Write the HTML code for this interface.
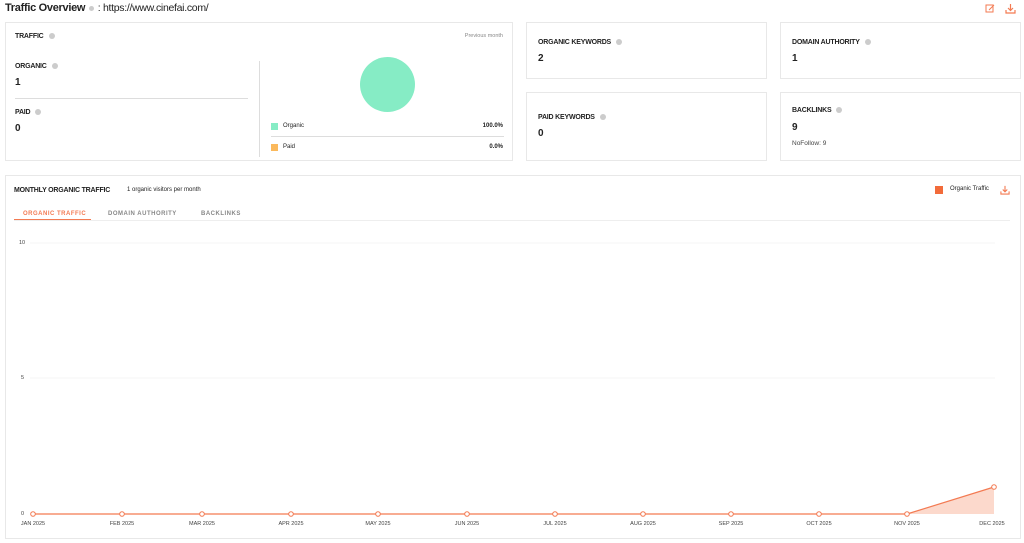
<!DOCTYPE html>
<html><head><style>
body{margin:0;width:1024px;height:543px;background:#fff;font-family:"Liberation Sans",sans-serif;color:#222;position:relative;overflow:hidden}
.a{position:absolute}
.card{position:absolute;border:1px solid #e8e8e8;background:#fff;box-sizing:border-box}
.lbl{font-size:7px;font-weight:bold;color:#222;letter-spacing:-0.2px}
.q{display:inline-block;width:6px;height:6px;border-radius:50%;background:#ccc;margin-left:5px;vertical-align:middle}
.val{font-size:10px;font-weight:bold}
.mo{font-size:5.5px;color:#444;position:absolute;top:521px;transform:translateX(-50%)}
</style></head><body>
<div class="a" style="left:5px;top:2px;font-size:11px;font-weight:bold;letter-spacing:-0.3px">Traffic Overview <span class="q" style="margin:0 1px;width:5px;height:5px"></span> <span style="font-weight:normal;font-size:10.5px">: https://www.cinefai.com/</span></div>
<svg class="a" style="left:985px;top:3px" width="11" height="11" viewBox="0 0 11 11"><rect x="1" y="2" width="7" height="7" fill="none" stroke="#f37a52" stroke-width="1"/><path d="M4 7L9 2" stroke="#f37a52" stroke-width="1"/></svg>
<svg class="a" style="left:1005px;top:3px" width="11" height="11" viewBox="0 0 11 11"><path d="M5.5 1V7M3 5l2.5 2.5L8 5M1 7v3h9V7" fill="none" stroke="#f37a52" stroke-width="1.2"/></svg>

<div class="card" style="left:5px;top:22px;width:508px;height:139px">
 <div class="a lbl" style="left:9px;top:10px">TRAFFIC<span class="q"></span></div>
 <div class="a" style="right:9px;top:10px;font-size:5.5px;color:#888">Previous month</div>
 <div class="a lbl" style="left:9px;top:40px">ORGANIC<span class="q"></span></div>
 <div class="a val" style="left:9px;top:54px">1</div>
 <div class="a" style="left:9px;top:75px;width:233px;border-top:1px solid #ddd"></div>
 <div class="a lbl" style="left:9px;top:86px">PAID<span class="q"></span></div>
 <div class="a val" style="left:9px;top:100px">0</div>
 <div class="a" style="left:253px;top:38px;height:96px;border-left:1px solid #ddd"></div>
 <div class="a" style="left:354px;top:34px;width:55px;height:55px;border-radius:50%;background:#86ecc5"></div>
 <div class="a" style="left:265px;top:100px;width:7px;height:7px;background:#86ecc5"></div>
 <div class="a" style="left:277px;top:100px;font-size:6px">Organic</div>
 <div class="a" style="right:9px;top:100px;font-size:6px;font-weight:bold">100.0%</div>
 <div class="a" style="left:265px;top:113px;width:233px;border-top:1px solid #ddd"></div>
 <div class="a" style="left:265px;top:121px;width:7px;height:7px;background:#fbb95c"></div>
 <div class="a" style="left:277px;top:121px;font-size:6px">Paid</div>
 <div class="a" style="right:9px;top:121px;font-size:6px;font-weight:bold">0.0%</div>
</div>

<div class="card" style="left:526px;top:22px;width:241px;height:57px">
 <div class="a lbl" style="left:11px;top:16px">ORGANIC KEYWORDS<span class="q"></span></div>
 <div class="a val" style="left:11px;top:30px">2</div></div>
<div class="card" style="left:780px;top:22px;width:241px;height:57px">
 <div class="a lbl" style="left:11px;top:16px">DOMAIN AUTHORITY<span class="q"></span></div>
 <div class="a val" style="left:11px;top:30px">1</div></div>
<div class="card" style="left:526px;top:92px;width:241px;height:69px">
 <div class="a lbl" style="left:11px;top:21px">PAID KEYWORDS<span class="q"></span></div>
 <div class="a val" style="left:11px;top:35px">0</div></div>
<div class="card" style="left:780px;top:92px;width:241px;height:69px">
 <div class="a lbl" style="left:11px;top:14px">BACKLINKS<span class="q"></span></div>
 <div class="a val" style="left:11px;top:29px">9</div>
 <div class="a" style="left:11px;top:47px;font-size:6.5px;color:#444">NoFollow: 9</div></div>

<div class="card" style="left:5px;top:175px;width:1016px;height:364px"></div>
<div class="a lbl" style="left:14px;top:187px;font-size:7px">MONTHLY ORGANIC TRAFFIC</div>
<div class="a" style="left:127px;top:187px;font-size:6px">1 organic visitors per month</div>
<div class="a" style="left:935px;top:186px;width:8px;height:8px;background:#f26b3a"></div>
<div class="a" style="left:950px;top:186px;font-size:6px">Organic Traffic</div>
<svg class="a" style="left:1000px;top:185px" width="10" height="10" viewBox="0 0 11 11"><path d="M5.5 1V7M3 5l2.5 2.5L8 5M1 7v3h9V7" fill="none" stroke="#f37a52" stroke-width="1.2"/></svg>
<div class="a" style="left:14px;top:220px;width:996px;border-top:1px solid #eee"></div>
<div class="a" style="left:23px;top:211px;font-size:6px;font-weight:bold;color:#f37a52;letter-spacing:0.5px">ORGANIC TRAFFIC</div>
<div class="a" style="left:14px;top:219px;width:77px;border-top:1.5px solid #f37a52"></div>
<div class="a" style="left:108px;top:211px;font-size:6px;font-weight:bold;color:#888;letter-spacing:0.5px">DOMAIN AUTHORITY</div>
<div class="a" style="left:201px;top:211px;font-size:6px;font-weight:bold;color:#888;letter-spacing:0.5px">BACKLINKS</div>
<div class="a" style="left:19px;top:240px;font-size:5.5px;color:#444">10</div>
<div class="a" style="left:21px;top:375px;font-size:5.5px;color:#444">5</div>
<div class="a" style="left:21px;top:511px;font-size:5.5px;color:#444">0</div>
<svg class="a" style="left:0;top:0" width="1024" height="543">
<line x1="30" y1="243" x2="995" y2="243" stroke="#f5f5f5"/>
<line x1="30" y1="378" x2="995" y2="378" stroke="#f5f5f5"/>
<polygon points="907,514 994,487 994,514" fill="#fcd9cc"/>
<polyline points="33,514 907,514 994,487" fill="none" stroke="#f37a52" stroke-width="1.2"/>
<g fill="#fff" stroke="#f37a52" stroke-width="1">
<circle cx="33" cy="514" r="2.3"/><circle cx="122" cy="514" r="2.3"/><circle cx="202" cy="514" r="2.3"/><circle cx="291" cy="514" r="2.3"/><circle cx="378" cy="514" r="2.3"/><circle cx="467" cy="514" r="2.3"/><circle cx="555" cy="514" r="2.3"/><circle cx="643" cy="514" r="2.3"/><circle cx="731" cy="514" r="2.3"/><circle cx="819" cy="514" r="2.3"/><circle cx="907" cy="514" r="2.3"/><circle cx="994" cy="487" r="2.3"/></g>
</svg>
<div class="mo" style="left:33px">JAN 2025</div><div class="mo" style="left:122px">FEB 2025</div><div class="mo" style="left:202px">MAR 2025</div><div class="mo" style="left:291px">APR 2025</div><div class="mo" style="left:378px">MAY 2025</div><div class="mo" style="left:467px">JUN 2025</div><div class="mo" style="left:555px">JUL 2025</div><div class="mo" style="left:643px">AUG 2025</div><div class="mo" style="left:731px">SEP 2025</div><div class="mo" style="left:819px">OCT 2025</div><div class="mo" style="left:907px">NOV 2025</div><div class="mo" style="left:992px">DEC 2025</div>
</body></html>
